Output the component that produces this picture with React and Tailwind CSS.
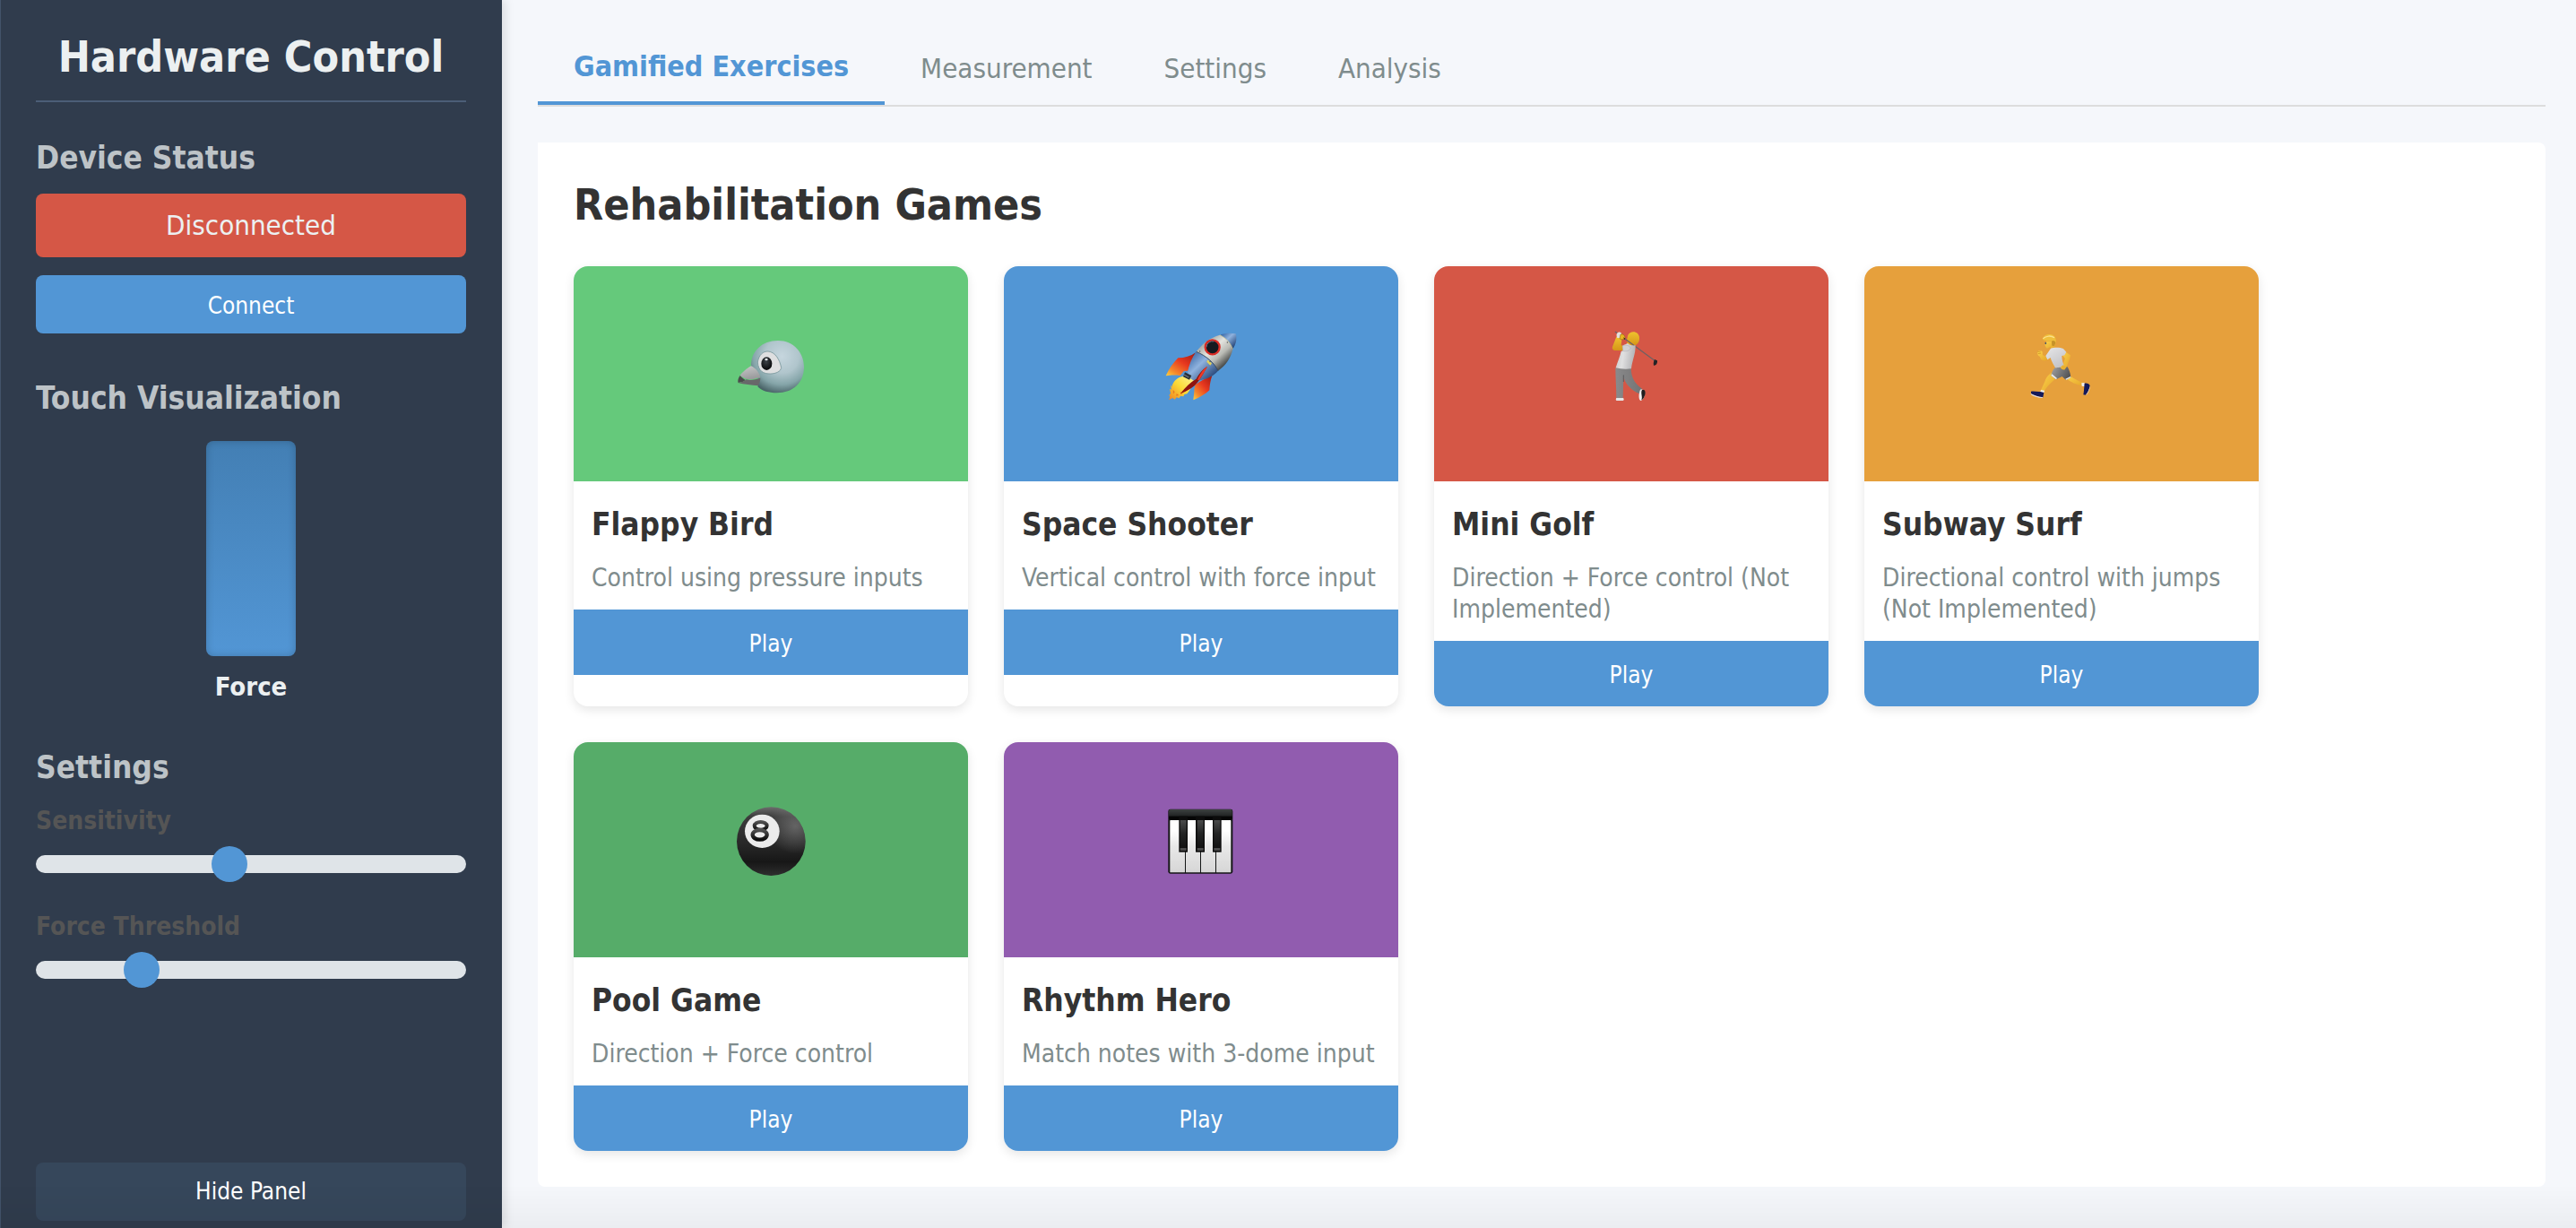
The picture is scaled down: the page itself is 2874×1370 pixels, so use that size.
import React, { useState } from 'react'

function Bird() {
  return (
    <svg viewBox="90 81 300 300" className="size-25" aria-hidden="true">
      <defs>
        <radialGradient id="bird-head" cx="0.58" cy="0.3" r="0.72">
          <stop offset="0" stopColor="#c6d6de" />
          <stop offset="0.45" stopColor="#b0c5cc" />
          <stop offset="0.75" stopColor="#85a5a9" />
          <stop offset="1" stopColor="#4a6468" />
        </radialGradient>
        <linearGradient id="bird-beak" x1="0" y1="0" x2="0.3" y2="1">
          <stop offset="0" stopColor="#c9c9ca" />
          <stop offset="1" stopColor="#9b9b9d" />
        </linearGradient>
        <radialGradient id="bird-eye" cx="0.45" cy="0.35" r="0.65">
          <stop offset="0" stopColor="#3a4045" />
          <stop offset="1" stopColor="#060708" />
        </radialGradient>
      </defs>
      <path d="M174 205C174 155 210 120 264 120C316 120 351 160 351 208C351 262 314 295 260 295C234 295 210 289 196 274C205 255 196 225 174 205Z" fill="url(#bird-head)" />
      <path d="M196 192C200 168 214 155 231 156C255 158 270 184 275 211C272 224 258 230 240 231C215 232 198 222 196 192Z" fill="#dedfe0" stroke="#78969b" strokeWidth="2.5" />
      <path d="M174 205C160 213 144 226 137 237C150 247 168 252 180 249L205 243C202 228 191 213 174 205Z" fill="url(#bird-beak)" />
      <path d="M137 237C131 244 128 255 131 262C134 258 145 262 155 252C149 248 142 243 137 237Z" fill="#4b4b4c" />
      <path d="M131 262C140 262 150 256 158 250C172 254 190 250 205 245C205 254 202 264 197 271C176 269 150 266 131 262Z" fill="#68686a" />
      <ellipse cx="226" cy="197" rx="18" ry="22" fill="url(#bird-eye)" />
      <ellipse cx="225" cy="183" rx="5" ry="4" fill="#dfe6e9" />
    </svg>
  )
}

function Rocket() {
  return (
    <svg viewBox="90 81 300 300" className="size-25" aria-hidden="true">
      <defs>
        <linearGradient id="rocket-body" x1="0.2" y1="0.15" x2="0.8" y2="0.8">
          <stop offset="0" stopColor="#9a9c98" />
          <stop offset="0.4" stopColor="#e3e4df" />
          <stop offset="0.7" stopColor="#b9bab4" />
          <stop offset="1" stopColor="#4c4e4d" />
        </linearGradient>
        <linearGradient id="rocket-blue" x1="0.1" y1="0.1" x2="0.9" y2="0.9">
          <stop offset="0" stopColor="#3d6ba9" />
          <stop offset="0.4" stopColor="#8fb2de" />
          <stop offset="1" stopColor="#1d3c70" />
        </linearGradient>
        <linearGradient id="rocket-fin" x1="1" y1="0" x2="0.1" y2="1">
          <stop offset="0" stopColor="#a01910" />
          <stop offset="0.45" stopColor="#e8381f" />
          <stop offset="0.8" stopColor="#f5862a" />
          <stop offset="1" stopColor="#fbc53c" />
        </linearGradient>
        <linearGradient id="rocket-flame" x1="1" y1="0" x2="0" y2="1">
          <stop offset="0" stopColor="#fdf59a" />
          <stop offset="0.5" stopColor="#fbd936" />
          <stop offset="1" stopColor="#ee8121" />
        </linearGradient>
      </defs>
      <path d="M182 239C160 242 147 255 142 275L138 268L141 284L135 281L138 297L133 303L136 308L132 319L145 312L152 317L158 310L167 313L171 305L181 307L184 300L193 298C205 285 212 268 217 250Z" fill="url(#rocket-flame)" />
      <path d="M146 284L152 292L147 299ZM158 297L166 303L157 305ZM170 291L179 297L172 300Z" fill="#e9781f" />
      <path d="M222 160C205 172 185 178 163 178C146 195 132 215 122 238C140 235 153 235 170 237L182 222L196 221C203 200 212 180 222 160Z" fill="url(#rocket-fin)" />
      <path d="M277 237C255 245 237 256 220 268C220 276 216 283 217 290L214 319C236 311 254 299 268 286C269 268 272 252 277 237Z" fill="url(#rocket-fin)" />
      <path d="M224 157C260 176 284 196 297 221C278 243 250 253 216 254C204 248 196 239 195 226C200 200 209 178 224 157Z" fill="url(#rocket-blue)" />
      <path d="M224 157C244 130 270 110 303 101C326 111 341 126 346 148C340 178 323 204 297 221C284 194 257 171 224 157Z" fill="url(#rocket-body)" />
      <path d="M303 101C320 95 338 94 356 97C361 114 357 132 346 148C338 127 324 112 303 101Z" fill="url(#rocket-blue)" />
      <path d="M303 101C324 112 338 127 346 148" fill="none" stroke="#d9cd8a" strokeWidth="2" />
      <path d="M224 157C257 171 284 194 297 221" fill="none" stroke="#33404f" strokeWidth="2.5" />
      <path d="M262 184L276 196L271 203L259 191Z" fill="#e4d15a" />
      <circle cx="278" cy="142" r="24" fill="#151a20" stroke="#d92b25" strokeWidth="7" />
      <path d="M258 142A20 20 0 0 1 283 123" fill="none" stroke="#5b6e82" strokeWidth="3" />
      <circle cx="236" cy="156" r="2" fill="#4a4c4c" />
      <circle cx="270" cy="190" r="2" fill="#4a4c4c" />
      <circle cx="328" cy="126" r="2" fill="#4a4c4c" />
      <path d="M186 226L208 237L201 251L180 241Z" fill="#2b3037" />
      <path d="M181 233L199 243" stroke="#818994" strokeWidth="3" />
      <path d="M261 206C243 217 233 232 224 248C205 258 188 276 171 297C194 289 216 276 230 257C243 240 252 223 261 206Z" fill="#8f140f" />
      <path d="M261 206C244 218 235 234 228 252L234 251C244 236 253 222 261 206Z" fill="#ef3a27" />
    </svg>
  )
}

function Golfer() {
  return (
    <svg viewBox="90 81 300 300" className="size-25" aria-hidden="true">
      <defs>
        <linearGradient id="golf-shirt" x1="0" y1="0" x2="1" y2="0.2">
          <stop offset="0" stopColor="#c4c4c6" />
          <stop offset="0.45" stopColor="#e0e0e1" />
          <stop offset="1" stopColor="#b5b5b8" />
        </linearGradient>
        <linearGradient id="golf-pants" x1="0" y1="0" x2="1" y2="0">
          <stop offset="0" stopColor="#8a8a8b" />
          <stop offset="1" stopColor="#737374" />
        </linearGradient>
        <linearGradient id="golf-skin" x1="0" y1="0" x2="0" y2="1">
          <stop offset="0" stopColor="#efc22e" />
          <stop offset="1" stopColor="#d59619" />
        </linearGradient>
      </defs>
      <path d="M226 112L254 112L254 137L226 136Z" fill="#e3a81f" />
      <path d="M229 101C234 90 251 87 261 96C271 106 268 125 258 133C248 139 235 134 230 126C226 118 226 109 229 101Z" fill="url(#golf-skin)" />
      <path d="M187 91L318 187" stroke="#6f6163" strokeWidth="4" strokeLinecap="round" />
      <path d="M318 183L327 187C328 196 323 204 315 203C313 197 315 189 318 183Z" fill="#242325" />
      <path d="M190 107L209 111L206 136L216 138L213 153L183 153C176 150 175 144 178 138Z" fill="url(#golf-skin)" />
      <path d="M192 96C199 88 208 91 208 101L207 112L193 111C190 105 190 100 192 96Z" fill="#e3e0dc" />
      <path d="M204 99C213 97 219 102 219 112C214 118 206 118 201 113Z" fill="#e8b51f" stroke="#7b5a1a" strokeWidth="1.5" />
      <path d="M213 109L220 113L217 117Z" fill="#2b2214" />
      <path d="M187 211L239 212C240 240 249 262 276 281L267 298C241 286 222 268 214 242L212 313L190 313C190 279 187 245 187 211Z" fill="url(#golf-pants)" />
      <path d="M214 235L214 258" stroke="#5d5d5e" strokeWidth="3" />
      <path d="M211 138C218 132 224 132 228 129C237 137 246 137 254 136C255 163 243 188 240 214C222 217 203 215 188 211C194 191 202 174 206 156L213 153Z" fill="url(#golf-shirt)" />
      <path d="M211 137C223 133 237 137 237 146C236 154 222 157 212 155Z" fill="#d1d1d3" stroke="#a9a9ac" strokeWidth="1.5" />
      <path d="M190 312L213 312C216 315 216 320 212 321L191 321C187 319 188 315 190 312Z" fill="#e7e6e6" />
      <path d="M270 284C280 281 287 287 286 296C285 308 279 319 271 321C264 316 264 300 270 284Z" fill="#f0efef" />
      <path d="M276 285C286 281 290 294 285 304C282 313 278 318 274 319C279 307 270 296 276 285Z" fill="#1f1d1e" />
    </svg>
  )
}

function Runner() {
  return (
    <svg viewBox="90 81 300 300" className="size-25" aria-hidden="true">
      <defs>
        <linearGradient id="run-shirt" x1="0" y1="0" x2="0.6" y2="1">
          <stop offset="0" stopColor="#e6e6e8" />
          <stop offset="1" stopColor="#c4c4c7" />
        </linearGradient>
        <linearGradient id="run-shorts" x1="0" y1="0" x2="1" y2="0.4">
          <stop offset="0" stopColor="#a3a3a4" />
          <stop offset="1" stopColor="#555557" />
        </linearGradient>
        <linearGradient id="run-skin" x1="0" y1="0" x2="1" y2="1">
          <stop offset="0" stopColor="#fbd24b" />
          <stop offset="1" stopColor="#e5a52a" />
        </linearGradient>
      </defs>
      <path d="M207 227C194 235 187 247 184 257L171 286L182 290C190 275 203 262 216 251L222 234Z" fill="url(#run-skin)" />
      <path d="M254 246C271 260 291 267 310 272L315 262C297 256 279 246 266 236Z" fill="url(#run-skin)" />
      <path d="M171 285L183 287L181 294L168 293Z" fill="#f1f0f0" />
      <path d="M138 290C149 288 158 292 169 291L181 294L178 310C164 309 149 304 138 298Z" fill="#14195a" />
      <path d="M137 297C149 304 164 309 177 309L176 312C161 312 147 307 138 301Z" fill="#e6e0df" />
      <path d="M307 262L317 261L318 274L308 272Z" fill="#f1f0f0" />
      <path d="M317 263C325 261 334 265 335 271C333 283 328 295 321 302L313 301C315 292 315 283 316 274Z" fill="#14195a" />
      <path d="M335 271C333 284 328 296 320 302L325 300C332 292 336 281 335 271Z" fill="#e6e0df" />
      <path d="M218 211L260 208C266 219 270 230 271 243L255 252L242 240L222 250L205 237C207 227 211 218 218 211Z" fill="url(#run-shorts)" />
      <path d="M205 237L222 250L225 246L208 232ZM255 252L271 244L270 240L253 248Z" fill="#e9e9ea" />
      <path d="M190 122L219 124L217 144L208 148L202 141L192 146C186 143 187 137 184 134L187 130Z" fill="url(#run-skin)" />
      <path d="M177 116C178 104 190 98 202 99C217 101 223 111 221 126C220 132 218 136 215 138L208 136L207 122C196 121 184 122 177 116Z" fill="#efbf3b" />
      <path d="M207 122C212 118 220 121 220 128L216 138L208 137Z" fill="#c6922a" />
      <path d="M178 113C188 104 205 102 216 110" fill="none" stroke="#fbe08a" strokeWidth="4" />
      <ellipse cx="187" cy="129" rx="2.5" ry="3.5" fill="#445468" />
      <path d="M160 158C163 153 172 152 176 157L177 168L190 175L193 184C187 189 179 188 172 183L167 173C161 171 158 164 160 158Z" fill="url(#run-skin)" />
      <path d="M160 158L170 156M161 164L171 162" stroke="#c98b1f" strokeWidth="2" />
      <path d="M252 157L270 169C269 181 262 194 258 205C254 216 245 219 239 214C235 207 239 201 245 201L252 180L244 170Z" fill="url(#run-skin)" />
      <path d="M204 146C216 142 235 142 246 147L256 158L250 169L241 171C241 184 245 195 248 203C238 211 230 209 219 211C214 201 206 189 203 177L193 184L187 171Z" fill="url(#run-shirt)" />
      <path d="M239 206C237 214 244 220 251 217L256 208L245 202Z" fill="#e9b02f" />
    </svg>
  )
}

function EightBall() {
  return (
    <svg viewBox="90 87 300 300" className="size-25" aria-hidden="true">
      <defs>
        <linearGradient id="ball-body" x1="0.5" y1="0" x2="0.5" y2="1">
          <stop offset="0" stopColor="#6c6c6c" />
          <stop offset="0.14" stopColor="#3c3c3c" />
          <stop offset="0.55" stopColor="#272727" />
          <stop offset="0.8" stopColor="#171717" />
          <stop offset="1" stopColor="#2e2e2e" />
        </linearGradient>
        <radialGradient id="ball-shine" cx="0.85" cy="0.28" r="0.4">
          <stop offset="0" stopColor="#8a8a8a" stopOpacity="0.55" />
          <stop offset="1" stopColor="#8a8a8a" stopOpacity="0" />
        </radialGradient>
        <linearGradient id="ball-eight" x1="0" y1="0" x2="0" y2="1">
          <stop offset="0" stopColor="#505050" />
          <stop offset="1" stopColor="#0c0c0c" />
        </linearGradient>
      </defs>
      <circle cx="241" cy="209" r="115" fill="url(#ball-body)" />
      <circle cx="241" cy="209" r="115" fill="url(#ball-shine)" />
      <ellipse cx="211" cy="175" rx="58" ry="56" fill="#ececec" />
      <ellipse cx="206" cy="157" rx="21" ry="13" fill="none" stroke="url(#ball-eight)" strokeWidth="12" />
      <ellipse cx="203" cy="187" rx="24" ry="16" fill="none" stroke="url(#ball-eight)" strokeWidth="13" />
    </svg>
  )
}

function Piano() {
  return (
    <svg viewBox="90 87 300 300" className="size-25" aria-hidden="true">
      <defs>
        <linearGradient id="piano-key" x1="0" y1="0" x2="0" y2="1">
          <stop offset="0.2" stopColor="#ffffff" />
          <stop offset="0.5" stopColor="#e8e8e8" />
          <stop offset="1" stopColor="#d6d6d6" />
        </linearGradient>
        <linearGradient id="piano-black" x1="0" y1="0" x2="0" y2="1">
          <stop offset="0" stopColor="#4a4b4b" />
          <stop offset="0.5" stopColor="#222323" />
          <stop offset="1" stopColor="#121212" />
        </linearGradient>
        <linearGradient id="piano-top" x1="0" y1="0" x2="0" y2="1">
          <stop offset="0" stopColor="#3d4141" />
          <stop offset="0.6" stopColor="#222525" />
          <stop offset="0.7" stopColor="#050505" />
          <stop offset="1" stopColor="#050505" />
        </linearGradient>
      </defs>
      <rect x="130" y="101" width="216" height="216" rx="7" fill="#141616" />
      <rect x="132" y="102" width="212" height="35" rx="5" fill="url(#piano-top)" />
      <rect x="136" y="138" width="50" height="175" rx="2" fill="url(#piano-key)" />
      <rect x="189" y="138" width="48" height="175" rx="2" fill="url(#piano-key)" />
      <rect x="240" y="138" width="48" height="175" rx="2" fill="url(#piano-key)" />
      <rect x="291" y="138" width="49" height="175" rx="2" fill="url(#piano-key)" />
      <rect x="166" y="125" width="29" height="120" fill="#0b0b0b" />
      <rect x="222" y="125" width="30" height="120" fill="#0b0b0b" />
      <rect x="279" y="125" width="29" height="120" fill="#0b0b0b" />
      <rect x="170" y="138" width="21" height="92" fill="url(#piano-black)" />
      <rect x="227" y="138" width="21" height="92" fill="url(#piano-black)" />
      <rect x="283" y="138" width="21" height="92" fill="url(#piano-black)" />
      <rect x="170" y="231" width="21" height="9" fill="#4b4b4b" />
      <rect x="227" y="231" width="21" height="9" fill="#4b4b4b" />
      <rect x="283" y="231" width="21" height="9" fill="#4b4b4b" />
    </svg>
  )
}

const games = [
  { name: 'Flappy Bird', text: 'Control using pressure inputs', color: 'bg-[#65c97b]', Icon: Bird },
  { name: 'Space Shooter', text: 'Vertical control with force input', color: 'bg-[#5296d5]', Icon: Rocket },
  { name: 'Mini Golf', text: 'Direction + Force control (Not Implemented)', color: 'bg-[#d55746]', Icon: Golfer },
  { name: 'Subway Surf', text: 'Directional control with jumps (Not Implemented)', color: 'bg-[#e6a03c]', Icon: Runner },
  { name: 'Pool Game', text: 'Direction + Force control', color: 'bg-[#56ac69]', Icon: EightBall },
  { name: 'Rhythm Hero', text: 'Match notes with 3-dome input', color: 'bg-[#915caf]', Icon: Piano },
]

const tabs = ['Gamified Exercises', 'Measurement', 'Settings', 'Analysis']

function SectionTitle({ children }) {
  return <h3 className="text-[35px] leading-11 font-bold text-[#bdc3c7]">{children}</h3>
}

function Slider({ id, label, min, max, initial }) {
  const [value, setValue] = useState(initial)
  return (
    <div className="flex flex-col gap-2.5">
      <label htmlFor={id} className="text-[28px] leading-9 font-bold text-[#555555]">{label}</label>
      <input
        id={id}
        type="range"
        min={min}
        max={max}
        value={value}
        onChange={(e) => setValue(Number(e.target.value))}
        className="h-10 w-full cursor-pointer appearance-none bg-transparent [&::-webkit-slider-runnable-track]:h-5 [&::-webkit-slider-runnable-track]:rounded-full [&::-webkit-slider-runnable-track]:bg-[#dfe4e8] [&::-webkit-slider-thumb]:-mt-2.5 [&::-webkit-slider-thumb]:size-10 [&::-webkit-slider-thumb]:appearance-none [&::-webkit-slider-thumb]:rounded-full [&::-webkit-slider-thumb]:bg-[#5296d5]"
      />
    </div>
  )
}

function GameCard({ name, text, color, Icon }) {
  return (
    <article className="overflow-hidden rounded-2xl bg-white shadow-[0_4px_12px_rgba(0,0,0,0.1)]">
      <div className={`flex h-60 items-center justify-center ${color}`}>
        <Icon />
      </div>
      <div className="px-5 pt-6.5 pb-4.5">
        <h3 className="text-[35px] leading-11 font-bold text-[#333333]">{name}</h3>
        <p className="mt-5 text-[28px] leading-[35px] text-[#7f8c8d]">{text}</p>
      </div>
      <button type="button" className="w-full cursor-pointer bg-[#5296d5] pt-5.5 pb-4.5 text-[26px] leading-[33px] text-white">Play</button>
    </article>
  )
}

export default function App() {
  const [active, setActive] = useState(tabs[0])
  return (
    <div className="flex min-h-screen bg-[#f5f7fb] font-['DejaVu_Sans_Condensed','DejaVu_Sans',sans-serif] text-[#333333]">
      <aside className="z-10 flex w-140 shrink-0 flex-col border-l border-[#43536a] bg-[#303c4d] pt-[34px] pr-10 pb-2 pl-[39px] text-[#ecf0f1] shadow-[4px_0_10px_rgba(0,0,0,0.1)]">
        <h2 className="border-b-2 border-[#4b5e77] pb-5 text-center text-5xl leading-[58px] font-bold">Hardware Control</h2>

        <section className="mt-10 flex flex-col">
          <SectionTitle>Device Status</SectionTitle>
          <div className="mt-4.5 rounded-lg bg-[#d55746] py-4 text-center text-[31px] leading-[39px]">Disconnected</div>
          <button type="button" className="mt-5 cursor-pointer rounded-lg bg-[#5296d5] pt-4.5 pb-3.5 text-[26px] leading-[33px] text-white">Connect</button>
        </section>

        <section className="mt-12.5 flex flex-col items-stretch">
          <SectionTitle>Touch Visualization</SectionTitle>
          <div className="mt-6.5 flex flex-col items-center gap-4">
            <div className="h-60 w-25 rounded-lg bg-linear-to-t from-[#5296d5] to-[#437fb4] shadow-[inset_0_0_10px_rgba(0,0,0,0.2)]" />
            <span className="text-[29px] leading-9 font-bold">Force</span>
          </div>
        </section>

        <section className="mt-12.5 flex flex-col">
          <SectionTitle>Settings</SectionTitle>
          <div className="mt-5 flex flex-col gap-8">
            <Slider id="sensitivity" label="Sensitivity" min={1} max={10} initial={5} />
            <Slider id="threshold" label="Force Threshold" min={10} max={100} initial={30} />
          </div>
        </section>

        <button type="button" className="mt-auto cursor-pointer rounded-lg bg-[#36475b] py-4 text-[26px] leading-[33px] text-white">Hide Panel</button>
      </aside>

      <main className="min-w-0 grow pt-9 pr-[34px] pb-10 pl-10">
        <nav className="flex border-b-2 border-[#dddddd]">
          {tabs.map((tab) => (
            <button
              key={tab}
              type="button"
              onClick={() => setActive(tab)}
              className={
                tab === active
                  ? 'cursor-pointer border-b-4 border-[#5296d5] px-10 py-5 text-[32px] leading-[37px] font-bold text-[#5296d5]'
                  : 'cursor-pointer px-10 py-5 text-[31px] leading-[37px] text-[#7f8c8d]'
              }
            >
              {tab}
            </button>
          ))}
        </nav>

        <section className="mt-10 rounded-lg rounded-tl-none bg-white px-10 py-10">
          <h2 className="text-5xl leading-[58px] font-bold">Rehabilitation Games</h2>
          <div className="mt-10 grid grid-cols-[repeat(auto-fill,440px)] gap-10">
            {games.map((game) => (
              <GameCard key={game.name} {...game} />
            ))}
          </div>
        </section>
      </main>

      <div className="pointer-events-none fixed inset-x-0 bottom-0 z-20 h-12 bg-linear-to-t from-black/4 to-transparent" />
    </div>
  )
}
